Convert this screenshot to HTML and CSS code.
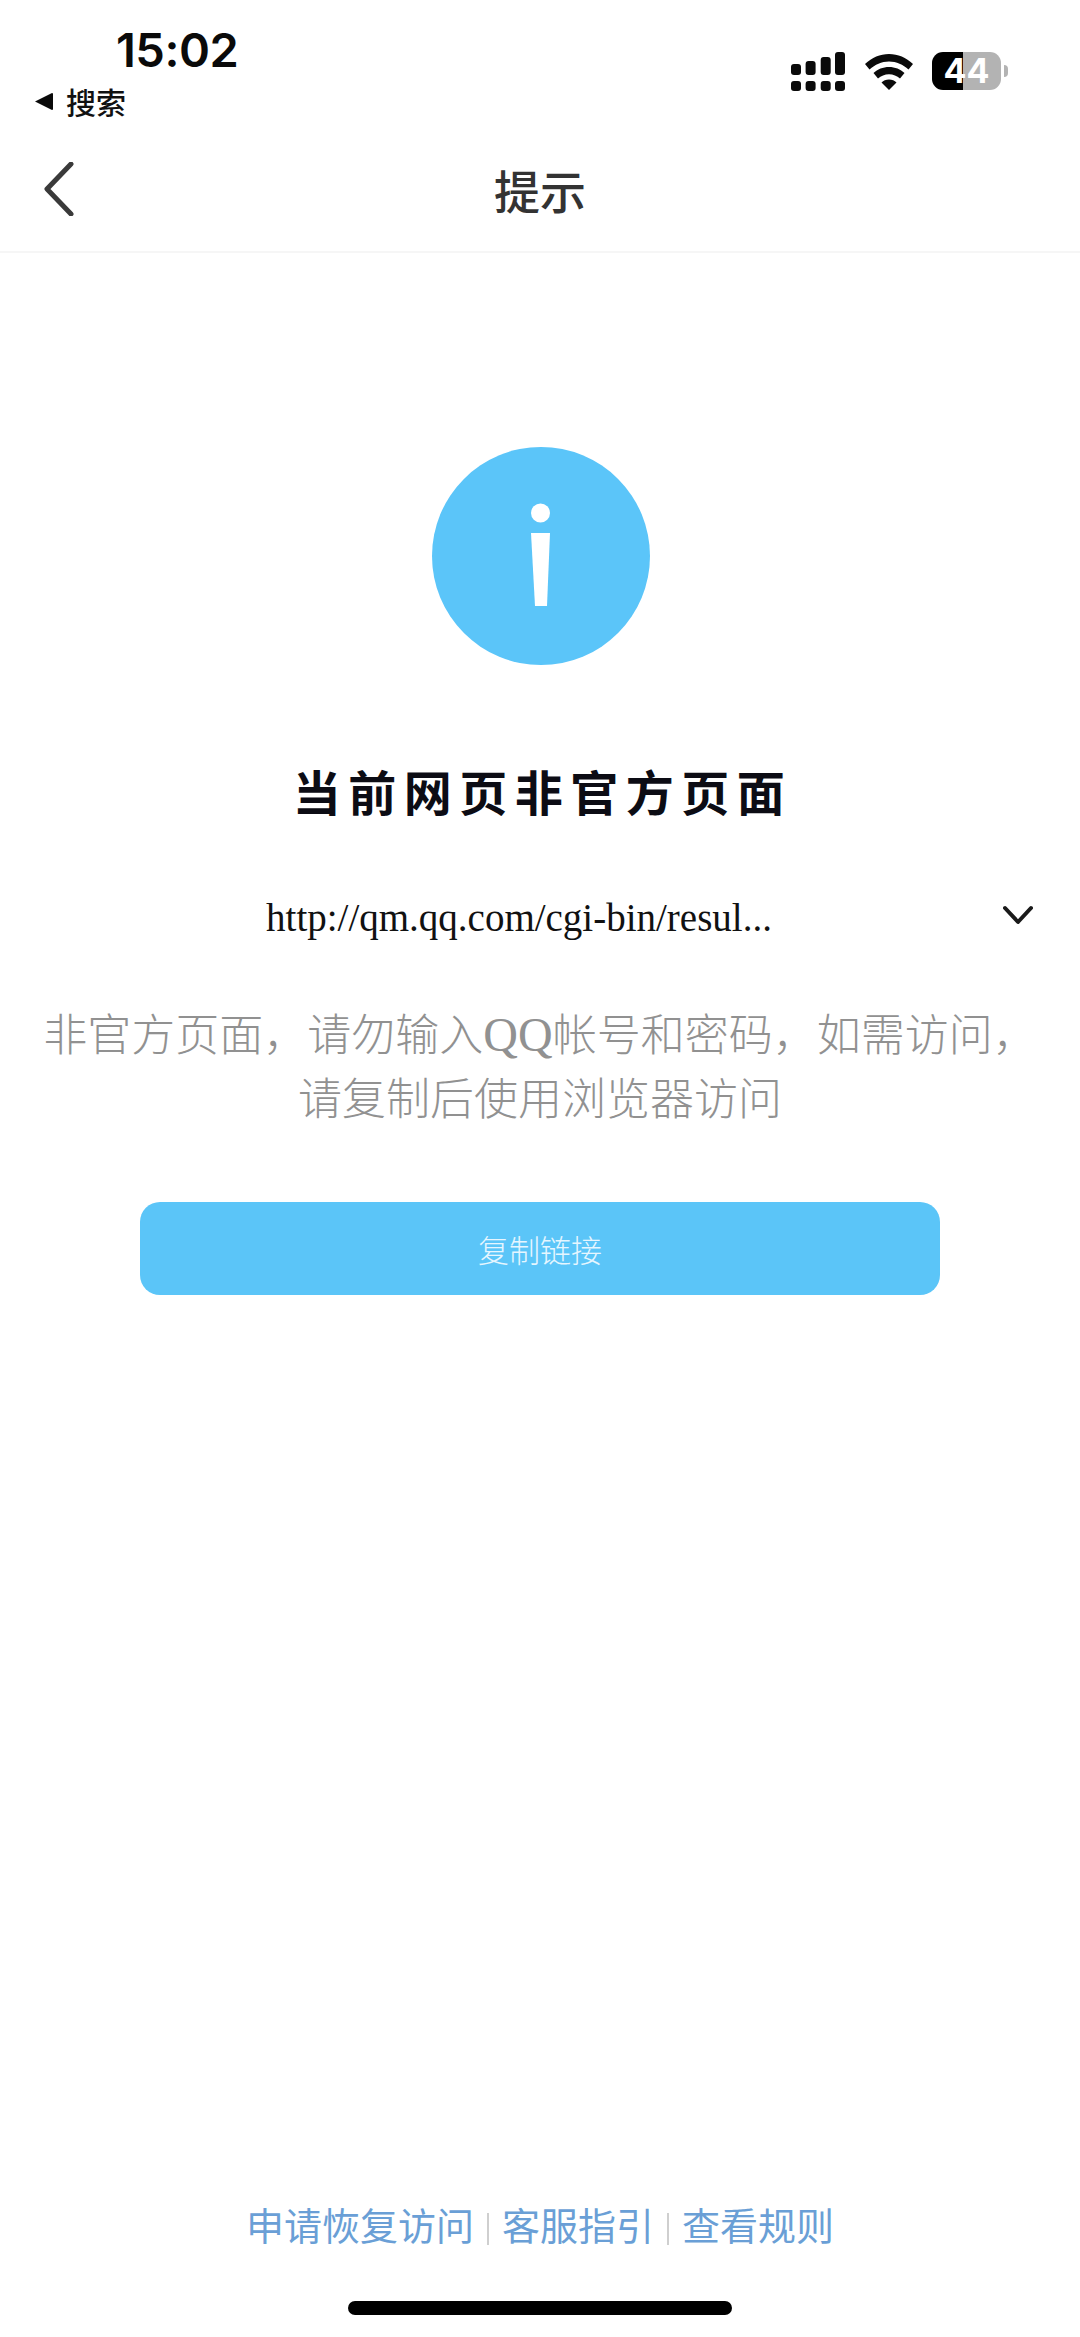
FILE: index.html
```html
<!DOCTYPE html>
<html lang="zh-CN">
<head>
<meta charset="utf-8">
<title>提示</title>
<link rel="stylesheet" href="styles.css">
</head>
<body>
<div class="page">
  <header class="status">
    <div class="status-left">
      <div class="time">15:02</div>
      <div class="crumb">
        <svg class="crumb-arrow" viewBox="0 0 18 19"><path d="M0 9.500 17 1a1 1 0 0 1 1 1v15a1 1 0 0 1-1 1z"/></svg>
        <span>搜索</span>
      </div>
    </div>
    <div class="status-right">
      <svg class="signal" viewBox="0 0 54 39">
        <rect x="0" y="12" width="10" height="11" rx="3"/>
        <rect x="14.600" y="9" width="10" height="14" rx="3"/>
        <rect x="29.700" y="5" width="10" height="18" rx="3"/>
        <rect x="44" y="0" width="10" height="23" rx="3"/>
        <rect x="0" y="29" width="10" height="10" rx="3"/>
        <rect x="14.600" y="29" width="10" height="10" rx="3"/>
        <rect x="29.700" y="29" width="10" height="10" rx="3"/>
        <rect x="44" y="29" width="10" height="10" rx="3"/>
      </svg>
      <svg class="wifi" viewBox="0 0 48 36">
        <path d="M24 0C15 0 7 3.500 0 10l4.500 5.500C10 10.500 16.500 7.500 24 7.500s14 3 19.500 8L48 10C41 3.500 33 0 24 0z"/>
        <path d="M24 13c-6 0-11.500 2.300-15.500 6l4.500 5.500c3-2.700 6.800-4.300 11-4.300s8 1.600 11 4.300l4.500-5.500C35.500 15.300 30 13 24 13z"/>
        <path d="M24 25.500c-3 0-5.600 1-7.500 3L24 36l7.500-7.500c-1.900-2-4.500-3-7.500-3z"/>
      </svg>
      <div class="battery"><span>44</span></div>
      <div class="battery-nub"></div>
    </div>
  </header>

  <nav class="nav">
    <svg class="back" viewBox="0 0 30 54"><path d="M27 2 3 27l24 25"/></svg>
    <h1 class="nav-title">提示</h1>
    <div class="nav-spacer"></div>
  </nav>

  <main class="main">
    <svg class="info" viewBox="0 0 218 218">
      <circle cx="109" cy="109" r="109" fill="#5bc5f9"/>
      <circle cx="108.500" cy="66" r="9.500" fill="#fff"/>
      <path d="M99 86h19l-3 73h-12z" fill="#fff"/>
    </svg>
    <h2 class="heading">当前网页非官方页面</h2>
    <div class="url-row">
      <div></div>
      <div class="url">http://qm.qq.com/cgi-bin/resul...</div>
      <svg class="chevron" viewBox="0 0 30 20"><path d="M2 3l13 14L28 3"/></svg>
    </div>
    <p class="message">非官方页面，请勿输入<span class="latin">QQ</span>帐号和密码，如需访问，<br>请复制后使用浏览器访问</p>
    <button class="copy" type="button">复制链接</button>
  </main>

  <footer class="footer">
    <div class="links">
      <a class="link">申请恢复访问</a>
      <i class="sep"></i>
      <a class="link">客服指引</a>
      <i class="sep"></i>
      <a class="link">查看规则</a>
    </div>
    <div class="home"></div>
  </footer>
</div>
</body>
</html>
```
FILE: styles.css
```css
* { box-sizing: border-box; }
html, body { margin: 0; padding: 0; background: #fff; }
body { font-family: "Noto Sans CJK SC", "Noto Sans", sans-serif; }

.page {
  width: 1080px;
  height: 2337px;
  display: flex;
  flex-direction: column;
  overflow: hidden;
}

/* status bar */
.status {
  height: 126px;
  flex: none;
  display: flex;
  justify-content: space-between;
  align-items: flex-start;
  padding: 24px 0 0 35px;
}
.status-left { display: flex; flex-direction: column; }
.time {
  margin-left: 81px;
  font-family: Inter, Roboto, sans-serif;
  font-size: 47px;
  font-weight: 600;
  line-height: 52px;
  letter-spacing: -0.5px;
  color: #0a0a0a;
}
.crumb {
  display: flex;
  align-items: center;
  gap: 13px;
  margin-top: 6px;
  font-size: 30px;
  font-weight: 500;
  line-height: 38px;
  color: #111;
}
.crumb-arrow { width: 18px; height: 19px; fill: #0a0a0a; }

.status-right {
  display: flex;
  align-items: flex-start;
  padding: 28px 72px 0 0;
}
.signal { width: 54px; height: 39px; fill: #0a0a0a; }
.wifi { width: 48px; height: 36px; margin: 2px 0 0 20px; fill: #0a0a0a; }
.battery {
  width: 69px;
  height: 38px;
  margin-left: 19px;
  border-radius: 11px;
  background: linear-gradient(90deg, #000 0, #000 31px, #b3b3b3 31px, #b3b3b3 100%);
  display: flex;
  align-items: center;
  justify-content: center;
  color: #fff;
  font-family: Inter, Roboto, sans-serif;
  font-size: 34px;
  font-weight: 700;
  line-height: 38px;
}
.battery-nub {
  width: 4px;
  height: 12px;
  margin: 13px 0 0 3px;
  border-radius: 0 4px 4px 0;
  background: #b3b3b3;
}

/* navigation */
.nav {
  height: 127px;
  flex: none;
  display: grid;
  grid-template-columns: 1fr auto 1fr;
  align-items: center;
  border-bottom: 2px solid #f6f6f6;
}
.back {
  width: 30px;
  height: 54px;
  margin-left: 44px;
  fill: none;
  stroke: #3a3a3a;
  stroke-width: 5;
  stroke-linecap: round;
  stroke-linejoin: round;
}
.nav-title {
  margin: 0;
  font-size: 46px;
  font-weight: 500;
  line-height: 60px;
  color: #333;
}

/* main content */
.main {
  flex: 1;
  display: flex;
  flex-direction: column;
  align-items: center;
  padding-top: 194px;
}
.info { width: 218px; height: 218px; margin-left: 2px; display: block; }
.heading {
  margin: 95px -5px 0 0;
  font-size: 48px;
  font-weight: 700;
  line-height: 60px;
  letter-spacing: 7.500px;
  color: #0c0c14;
}
.url-row {
  width: 100%;
  margin-top: 75px;
  display: grid;
  grid-template-columns: 1fr auto 1fr;
  align-items: center;
  color: #111;
}
.url {
  margin-right: 42px;
  font-family: "Liberation Serif", serif;
  font-size: 39px;
  line-height: 46px;
}
.chevron {
  justify-self: end;
  width: 30px;
  height: 20px;
  margin: 0 47px 6px 0;
  fill: none;
  stroke: #1a1a1a;
  stroke-width: 4;
  stroke-linecap: round;
  stroke-linejoin: round;
}
.message {
  margin: 59px 0 0;
  font-size: 44px;
  font-weight: 300;
  line-height: 64px;
  text-align: center;
  color: #919191;
  white-space: nowrap;
}
.latin { font-family: "Liberation Serif", serif; font-size: 48px; line-height: 0; }
.copy {
  width: 800px;
  height: 93px;
  margin-top: 74px;
  border: 0;
  border-radius: 20px;
  background: #5bc5f8;
  color: #e6f6ff;
  font-family: inherit;
  font-size: 31px;
  font-weight: 300;
}

/* footer */
.footer {
  flex: none;
  display: flex;
  flex-direction: column;
  align-items: center;
  padding-bottom: 22px;
}
.links {
  display: flex;
  align-items: center;
  gap: 13px;
  font-size: 38px;
  line-height: 50px;
  color: #6a9fd6;
}
.sep {
  width: 2px;
  height: 32px;
  margin-top: 10px;
  background: #cfcfcf;
}
.home {
  width: 384px;
  height: 14px;
  margin-top: 52px;
  border-radius: 7px;
  background: #000;
}
```
